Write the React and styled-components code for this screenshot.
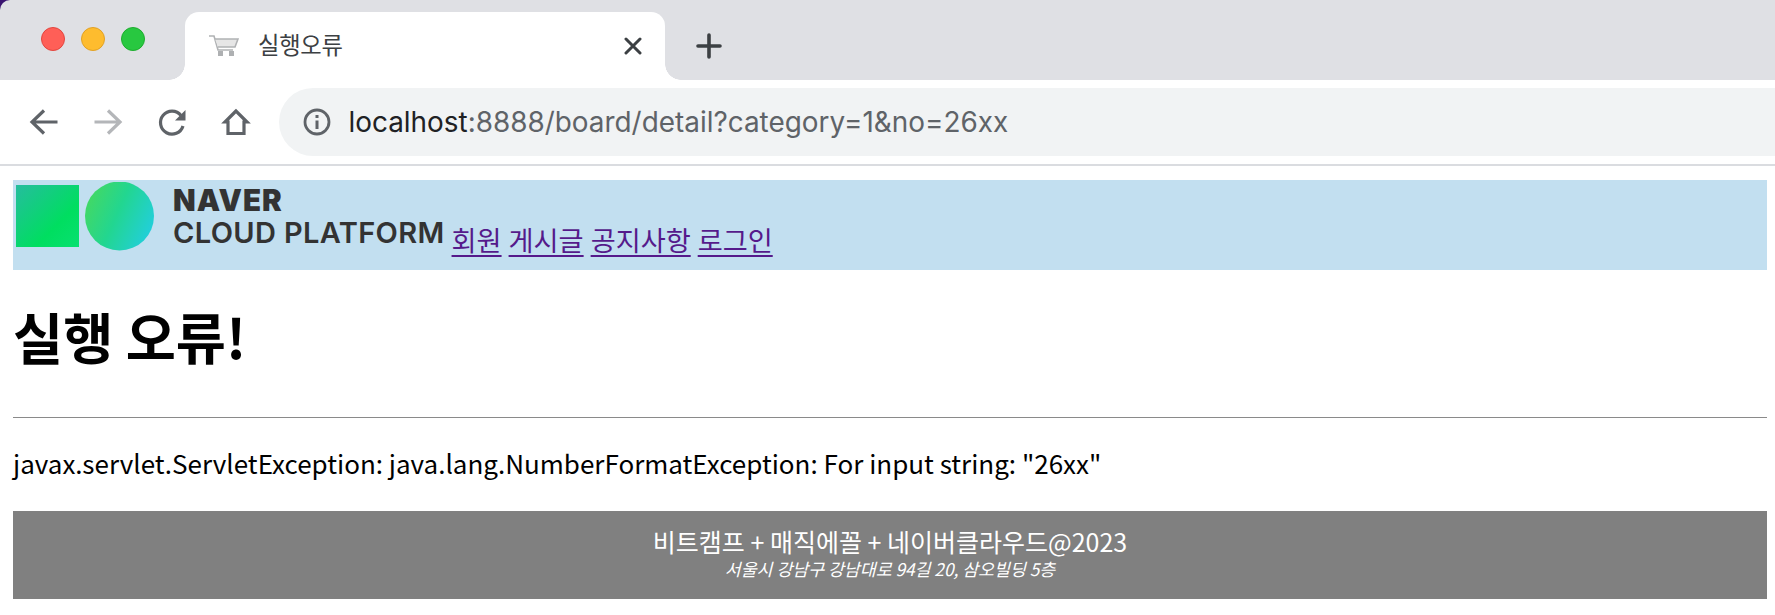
import React from 'react';
import styled, { createGlobalStyle } from 'styled-components';

const Global = createGlobalStyle`
  html, body { margin: 0; padding: 0; background: #fff; }
  body { font-family: "Noto Sans CJK KR", "Noto Sans", sans-serif; color: #000; overflow: hidden; }
`;

const Window = styled.div`
  width: 1775px;
  height: 615px;
  background: #fff;
  display: flex;
  flex-direction: column;
  overflow: hidden;
`;
const Frame = styled.div`
  background: #3a1470;
`;
const TabStrip = styled.div`
  height: 80px;
  background: #dfe0e4;
  border-top-left-radius: 10px;
  display: flex;
  align-items: flex-end;
  padding-left: 41px;
`;
const Lights = styled.div`
  display: flex;
  gap: 16px;
  align-self: flex-start;
  margin-top: 27px;
  width: 144px;
`;
const Light = styled.span`
  width: 24px;
  height: 24px;
  border-radius: 50%;
  box-sizing: border-box;
  background: ${p => p.$c};
  border: 1px solid ${p => p.$b};
`;
const Tab = styled.div`
  position: relative;
  width: 480px;
  height: 68px;
  background: #fff;
  border-radius: 14px 14px 0 0;
  display: flex;
  align-items: center;
  padding: 0 23px 0 24px;
  box-sizing: border-box;
  &::before, &::after {
    content: "";
    position: absolute;
    bottom: 0;
    width: 16px;
    height: 16px;
  }
  &::before { left: -16px; background: radial-gradient(circle at 0 0, transparent 15.5px, #fff 16px); }
  &::after { right: -16px; background: radial-gradient(circle at 100% 0, transparent 15.5px, #fff 16px); }
`;
const TabTitle = styled.span`
  margin-left: 19px;
  margin-bottom: 4px;
  font-size: 23.3px;
  line-height: 30px;
  color: #3c4043;
  flex: 1;
  letter-spacing: -0.3px;
`;
const NewTab = styled.div`
  margin-left: 31px;
  align-self: flex-start;
  margin-top: 33px;
  display: flex;
`;
const Toolbar = styled.div`
  height: 84px;
  border-bottom: 2px solid #dadce0;
  box-sizing: content-box;
  display: flex;
  align-items: center;
  padding-left: 26.5px;
`;
const NavIcon = styled.svg`
  width: 34px;
  height: 34px;
  flex: none;
  margin-right: ${p => p.$gap}px;
  fill: none;
  stroke: ${p => p.$muted ? '#b4b6b9' : '#5f6368'};
  stroke-width: 3.2;
`;
const Omnibox = styled.div`
  flex: 1;
  height: 68px;
  background: #f1f3f4;
  border-radius: 34px 0 0 34px;
  display: flex;
  align-items: center;
  padding-left: 24px;
  margin-left: 26px;
`;
const Url = styled.div`
  margin-left: 18px;
  font-family: "Inter", "Noto Sans", sans-serif;
  font-size: 27.9px;
  color: #202124;
`;
const UrlRest = styled.span`
  color: #5f6368;
`;

const Page = styled.div`
  padding: 14px 8px 0 13px;
  display: flex;
  flex-direction: column;
`;
const Header = styled.header`
  height: 90px;
  background: #c2dff0;
  display: flex;
  align-items: flex-start;
  padding-left: 2px;
`;
const Logo = styled.div`
  display: flex;
  gap: 6px;
  height: 90px;
  align-items: flex-start;
`;
const LogoMark = styled.svg`
  width: 140px;
  height: 70px;
  margin-top: 2px;
  flex: none;
`;
const LogoText = styled.div`
  display: flex;
  flex-direction: column;
  margin-left: 12px;
  margin-top: 3px;
  font-family: "Inter", "Liberation Sans", sans-serif;
  color: #333;
`;
const LogoLine = styled.span`
  font-size: ${p => p.$s}px;
  line-height: ${p => p.$h}px;
  font-weight: ${p => p.$w};
  letter-spacing: ${p => p.$ls}px;
  white-space: nowrap;
`;
const Nav = styled.nav`
  display: flex;
  gap: 7px;
  margin-left: 7px;
  margin-top: 40px;
  font-size: 27.2px;
  line-height: 38px;
`;
const NavLink = styled.a`
  color: #551a8b;
  text-decoration: underline;
  text-underline-offset: 4px;
`;
const Title = styled.h1`
  margin: 27px 0 0;
  font-size: 54.5px;
  line-height: 78px;
  font-weight: 700;
`;
const Rule = styled.hr`
  margin: 42px 0 0;
  border: 0;
  border-top: 1px solid #8a8a8a;
  height: 0;
`;
const Message = styled.p`
  margin: 27px 0 0;
  font-size: 26px;
  line-height: 36px;
`;
const Footer = styled.footer`
  margin-top: 30px;
  height: 88px;
  padding-bottom: 4px;
  box-sizing: border-box;
  background: #808080;
  color: #fff;
  text-align: center;
  display: flex;
  flex-direction: column;
  align-items: center;
  justify-content: center;
`;
const FooterLine = styled.div`
  font-size: 25px;
  line-height: 32px;
`;
const FooterAddress = styled.address`
  font-size: 17.3px;
  line-height: 24px;
  font-style: italic;
`;

const Cart = () => (
  <svg width="30" height="22" viewBox="0 0 30 22" fill="none" stroke="#b0b2b4" strokeWidth="1.6">
    <path d="M0 1h5l4 14h15" />
    <path d="M6 4h23l-3 8H9" fill="#e6e6e6" />
    <rect x="9" y="16" width="5" height="5" fill="#aeb0b2" stroke="none" />
    <rect x="20" y="16" width="5" height="5" fill="#aeb0b2" stroke="none" />
  </svg>
);

export default function App() {
  return (
    <Window>
      <Global />
      <Frame>
        <TabStrip>
          <Lights>
            <Light $c="#ff5f57" $b="#e2463f" />
            <Light $c="#febc2e" $b="#e1a125" />
            <Light $c="#28c840" $b="#1ead2e" />
          </Lights>
          <Tab>
            <Cart />
            <TabTitle>실행오류</TabTitle>
            <svg width="18" height="18" viewBox="0 0 18 18" stroke="#3c4043" strokeWidth="3" strokeLinecap="round">
              <path d="M2 2l14 14M16 2L2 16" />
            </svg>
          </Tab>
          <NewTab>
            <svg width="26" height="26" viewBox="0 0 26 26" stroke="#3c4043" strokeWidth="3.6" strokeLinecap="round">
              <path d="M13 2v22M2 13h22" />
            </svg>
          </NewTab>
        </TabStrip>
      </Frame>
      <Toolbar>
        <NavIcon $gap={30} viewBox="0 0 34 34"><path d="M30.5 17H5M17 5.5L5 17l12 11.5" /></NavIcon>
        <NavIcon $gap={30} $muted viewBox="0 0 34 34"><path d="M3.5 17H29M17 5.5L29 17 17 28.5" /></NavIcon>
        <NavIcon $gap={30} viewBox="0 0 34 34"><path d="M26 10.5A11.5 11.5 0 1 0 28 21" /><path d="M30.5 5v10.5H20z" fill="#5f6368" stroke="none" /></NavIcon>
        <NavIcon $gap={0} viewBox="0 0 34 34"><path d="M17 6L6 17h3v11.5h16V17h3z" /></NavIcon>
        <Omnibox>
          <svg width="28" height="28" viewBox="0 0 28 28" fill="none" stroke="#5f6368" strokeWidth="2.8">
            <circle cx="14" cy="14" r="12" />
            <path d="M14 12.5v8.5M14 7v3" strokeWidth="3" />
          </svg>
          <Url>localhost<UrlRest>:8888/board/detail?category=1&amp;no=26xx</UrlRest></Url>
        </Omnibox>
      </Toolbar>
      <Page>
        <Header>
          <Logo>
            <LogoMark viewBox="0 0 140 70">
              <defs>
                <linearGradient id="sq" x1="0" y1="0" x2="1" y2="1">
                  <stop offset="0" stopColor="#25bd9e" />
                  <stop offset="0.65" stopColor="#00de60" />
                  <stop offset="1" stopColor="#08e070" />
                </linearGradient>
                <linearGradient id="ci" x1="0.1" y1="0.2" x2="1" y2="0.6">
                  <stop offset="0" stopColor="#40d868" />
                  <stop offset="0.45" stopColor="#22d690" />
                  <stop offset="1" stopColor="#22cfd8" />
                </linearGradient>
              </defs>
              <rect x="1" y="3" width="63" height="62" fill="url(#sq)" />
              <circle cx="104.5" cy="34" r="34.5" fill="url(#ci)" />
            </LogoMark>
            <LogoText>
              <LogoLine $s={29.5} $h={35} $w={900} $ls={1}>NAVER</LogoLine>
              <LogoLine $s={29} $h={30} $w={600} $ls={0.35}>CLOUD PLATFORM</LogoLine>
            </LogoText>
          </Logo>
          <Nav>
            <NavLink href="#">회원</NavLink>
            <NavLink href="#">게시글</NavLink>
            <NavLink href="#">공지사항</NavLink>
            <NavLink href="#">로그인</NavLink>
          </Nav>
        </Header>
        <Title>실행 오류!</Title>
        <Rule />
        <Message>javax.servlet.ServletException: java.lang.NumberFormatException: For input string: "26xx"</Message>
        <Footer>
          <FooterLine>비트캠프 + 매직에꼴 + 네이버클라우드@2023</FooterLine>
          <FooterAddress>서울시 강남구 강남대로 94길 20, 삼오빌딩 5층</FooterAddress>
        </Footer>
      </Page>
    </Window>
  );
}
